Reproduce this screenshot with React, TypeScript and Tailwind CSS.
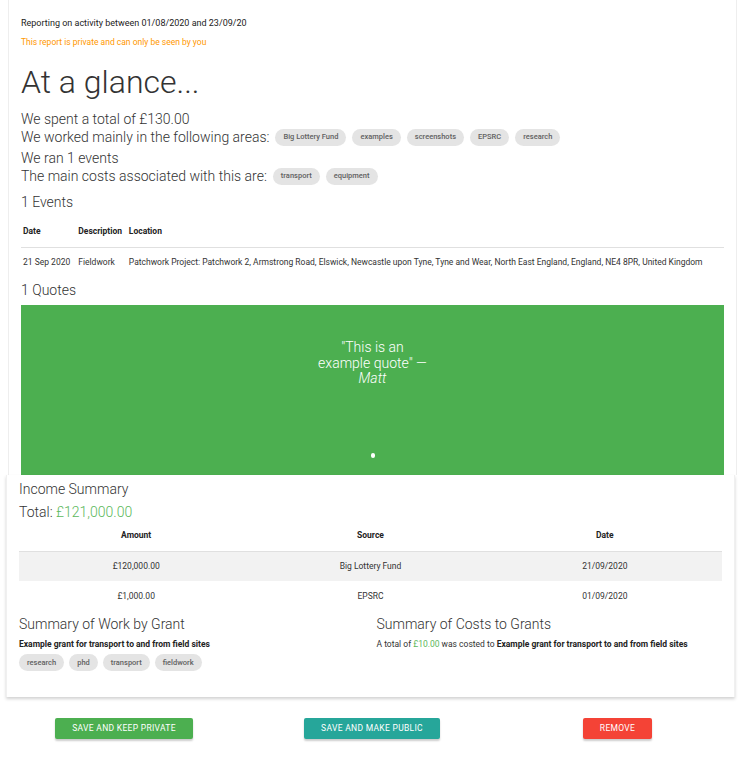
import React from "react";

const Chip = ({ label }: { label: string }) => (
  <span className="inline-flex h-[17px] items-center rounded-full bg-[#e4e4e4] px-[8px] text-[7.5px] font-medium text-[#616161] align-middle">
    {label}
  </span>
);

const areas = ["Big Lottery Fund", "examples", "screenshots", "EPSRC", "research"];
const costs = ["transport", "equipment"];
const grantTags = ["research", "phd", "transport", "fieldwork"];

const income = [
  { amount: "£120,000.00", source: "Big Lottery Fund", date: "21/09/2020" },
  { amount: "£1,000.00", source: "EPSRC", date: "01/09/2020" },
];

export default function App() {
  return (
    <div className="min-h-[757px] w-[743px] bg-white font-['Roboto',sans-serif] text-[#333]">
      {/* top card */}
      <div className="ml-[8px] w-[729px] border-x border-[#eeeeee] px-[12px] pt-[17px] pb-0">
        <p className="text-[9px] leading-[12px] text-[#222]">Reporting on activity between 01/08/2020 and 23/09/20</p>
        <p className="mt-[7px] text-[8.5px] leading-[12px] text-[#ff9800]">This report is private and can only be seen by you</p>
        <h1 className="mt-[16px] text-[32px] font-light leading-[36px] text-[#333]">At a glance...</h1>

        <div className="mt-[10px] text-[14px] font-light leading-[18px] text-[#333]">
          <div>We spent a total of £130.00</div>
          <div className="flex items-center gap-[6px]">
            <span>We worked mainly in the following areas:</span>
            {areas.map((a) => (
              <Chip key={a} label={a} />
            ))}
          </div>
          <div className="mt-[3px]">We ran 1 events</div>
          <div className="flex items-center gap-[6px]">
            <span>The main costs associated with this are:</span>
            {costs.map((c) => (
              <Chip key={c} label={c} />
            ))}
          </div>
        </div>

        <h2 className="mt-[8px] text-[14px] font-light leading-[18px]">1 Events</h2>
        <table className="mt-[6px] w-full text-left text-[8.5px]">
          <thead>
            <tr className="border-b border-[#e0e0e0]">
              <th className="h-[30px] pl-[2px] pr-[8px] font-bold text-[#222]">Date</th>
              <th className="pr-[5px] font-bold text-[#222]">Description</th>
              <th className="font-bold text-[#222]">Location</th>
            </tr>
          </thead>
          <tbody>
            <tr>
              <td className="h-[30px] pl-[2px] pr-[6px] text-[#333]">21 Sep 2020</td>
              <td className="pr-[5px] text-[#333]">Fieldwork</td>
              <td className="text-[#333]">
                Patchwork Project: Patchwork 2, Armstrong Road, Elswick, Newcastle upon Tyne, Tyne and Wear, North East England, England, NE4 8PR, United Kingdom
              </td>
            </tr>
          </tbody>
        </table>

        <h2 className="mt-[4px] text-[14px] font-light leading-[18px]">1 Quotes</h2>
        <div className="mt-[6px] flex h-[170px] flex-col items-center bg-[#4caf50] pt-[35px] text-white">
          <div className="w-[112px] text-center text-[14px] font-light leading-[15.5px]">
            "This is an example quote" — <i>Matt</i>
          </div>
          <div className="mt-auto mb-[17px] h-[5px] w-[4px] rounded-full bg-white" />
        </div>
      </div>

      {/* bottom card */}
      <div className="ml-[6px] w-[729px] border-x border-[#f0f0f0] px-[12px] pt-[5px] pb-[26px] shadow-[0_2px_3px_rgba(0,0,0,0.18)]">
        <h2 className="text-[14px] font-light leading-[18px]">Income Summary</h2>
        <div className="mt-[5px] text-[14px] font-light leading-[18px]">
          Total: <span className="text-[#5cb85c]">£121,000.00</span>
        </div>
        <table className="w-full text-center text-[8.5px]">
          <thead>
            <tr className="border-b border-[#e0e0e0]">
              <th className="h-[30px] w-1/3 font-bold text-[#222]">Amount</th>
              <th className="w-1/3 font-bold text-[#222]">Source</th>
              <th className="w-1/3 font-bold text-[#222]">Date</th>
            </tr>
          </thead>
          <tbody>
            {income.map((r, i) => (
              <tr key={r.source} className={i === 0 ? "bg-[#f2f2f2]" : ""}>
                <td className="h-[30px] font-normal text-[#333]">{r.amount}</td>
                <td className="font-normal text-[#333]">{r.source}</td>
                <td className="font-normal text-[#333]">{r.date}</td>
              </tr>
            ))}
          </tbody>
        </table>

        <div className="mt-[4px] grid grid-cols-2 gap-[12px]">
          <div>
            <h3 className="text-[14px] font-light leading-[18px]">Summary of Work by Grant</h3>
            <p className="mt-[5px] text-[8.5px] font-bold text-[#222]">Example grant for transport to and from field sites</p>
            <div className="mt-[3px] flex gap-[5px]">
              {grantTags.map((t) => (
                <Chip key={t} label={t} />
              ))}
            </div>
          </div>
          <div>
            <h3 className="text-[14px] font-light leading-[18px]">Summary of Costs to Grants</h3>
            <p className="mt-[5px] text-[8.5px] text-[#333]">
              A total of <span className="text-[#5cb85c]">£10.00</span> was costed to{" "}
              <b className="text-[#222]">Example grant for transport to and from field sites</b>
            </p>
          </div>
        </div>
      </div>

      {/* actions */}
      <div className="mt-[21px] flex items-center">
        <div className="flex w-[248px] justify-center">
          <button className="h-[21px] w-[138px] rounded-[2px] bg-[#4caf50] text-[8.5px] uppercase tracking-[0.3px] text-white shadow-[0_2px_2px_rgba(0,0,0,0.2)]">
            Save and keep private
          </button>
        </div>
        <div className="flex w-[248px] justify-center">
          <button className="h-[21px] w-[136px] rounded-[2px] bg-[#26a69a] text-[8.5px] uppercase tracking-[0.3px] text-white shadow-[0_2px_2px_rgba(0,0,0,0.2)]">
            Save and make public
          </button>
        </div>
        <div className="flex w-[247px] justify-center">
          <button className="ml-[-4px] h-[21px] w-[69px] rounded-[2px] bg-[#f44336] text-[8.5px] uppercase tracking-[0.3px] text-white shadow-[0_2px_2px_rgba(0,0,0,0.2)]">
            Remove
          </button>
        </div>
      </div>
    </div>
  );
}
